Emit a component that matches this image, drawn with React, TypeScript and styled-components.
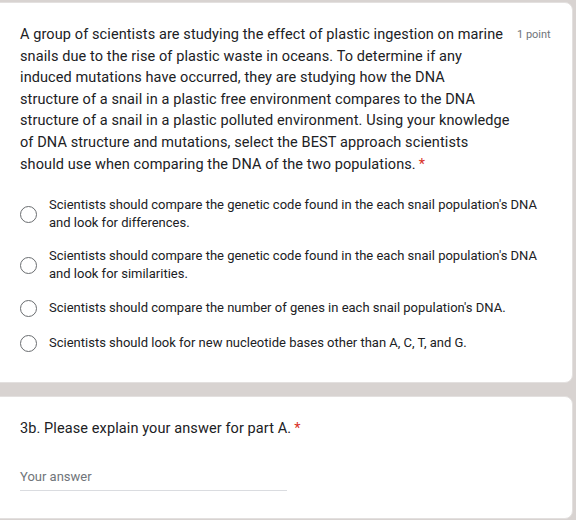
import React from "react";
import styled, { createGlobalStyle } from "styled-components";

const Global = createGlobalStyle`
  html, body { margin: 0; padding: 0; }
  body {
    background: #d8d3d1;
    width: 576px;
    height: 520px;
    overflow: hidden;
    font-family: Roboto, "Liberation Sans", Arial, sans-serif;
    color: #202124;
  }
`;

const Page = styled.div`
  display: flex;
  flex-direction: column;
  gap: 13px;
  padding-top: 2px;
`;

const Card = styled.div<{ $h: number; $top: number }>`
  background: #ffffff;
  margin-left: -10px;
  width: 583px;
  height: ${(p) => p.$h}px;
  box-sizing: border-box;
  border-radius: 8px;
  border: 1px solid #e3e0df;
  padding: ${(p) => p.$top}px 0 0 29px;
`;

const Header = styled.div`
  display: flex;
  align-items: flex-start;
`;

const Question = styled.div`
  width: 491px;
  font-size: 14.5px;
  line-height: 21.6px;
  letter-spacing: 0.1px;
  color: #202124;
  white-space: nowrap;
`;

const Star = styled.span`
  color: #d93025;
  margin-left: 3px;
`;

const Points = styled.div`
  margin-left: 6px;
  font-size: 11px;
  line-height: 21.6px;
  color: #70757a;
`;

const Options = styled.div`
  display: flex;
  flex-direction: column;
  gap: 15px;
  margin-top: 21px;
`;

const Row = styled.label`
  display: flex;
  align-items: center;
  min-height: 20px;
`;

const Radio = styled.span`
  width: 17px;
  height: 17px;
  box-sizing: border-box;
  border: 1.5px solid #6a6d70;
  border-radius: 50%;
  margin-left: -0.5px;
  margin-right: 12.5px;
  flex: none;
`;

const OptionText = styled.span`
  font-size: 13px;
  line-height: 18px;
  color: #202124;
  width: 495px;
`;

const Title = styled.div`
  font-size: 14.5px;
  line-height: 21.6px;
  letter-spacing: 0.1px;
  color: #202124;
`;

const Answer = styled.div`
  margin-top: 28px;
  width: 267px;
  border-bottom: 1px solid #dadce0;
  font-size: 13px;
  line-height: 18px;
  padding-bottom: 4px;
  color: #70757a;
`;

const questionLines = [
  "A group of scientists are studying the effect of plastic ingestion on marine",
  "snails due to the rise of plastic waste in oceans. To determine if any",
  "induced mutations have occurred, they are studying how the DNA",
  "structure of a snail in a plastic free environment compares to the DNA",
  "structure of a snail in a plastic polluted environment. Using your knowledge",
  "of DNA structure and mutations, select the BEST approach scientists",
];

const options = [
  "Scientists should compare the genetic code found in the each snail population's DNA and look for differences.",
  "Scientists should compare the genetic code found in the each snail population's DNA and look for similarities.",
  "Scientists should compare the number of genes in each snail population's DNA.",
  "Scientists should look for new nucleotide bases other than A, C, T, and G.",
];

export default function App() {
  return (
    <>
      <Global />
      <Page>
        <Card $h={381} $top={21}>
          <Header>
            <Question>
              {questionLines.map((l) => (
                <React.Fragment key={l}>
                  {l}
                  <br />
                </React.Fragment>
              ))}
              should use when comparing the DNA of the two populations.<Star>*</Star>
            </Question>
            <Points>1 point</Points>
          </Header>
          <Options>
            {options.map((o) => (
              <Row key={o}>
                <Radio />
                <OptionText>{o}</OptionText>
              </Row>
            ))}
          </Options>
        </Card>
        <Card $h={123} $top={21}>
          <Title>
            3b. Please explain your answer for part A.<Star>*</Star>
          </Title>
          <Answer>Your answer</Answer>
        </Card>
      </Page>
    </>
  );
}
